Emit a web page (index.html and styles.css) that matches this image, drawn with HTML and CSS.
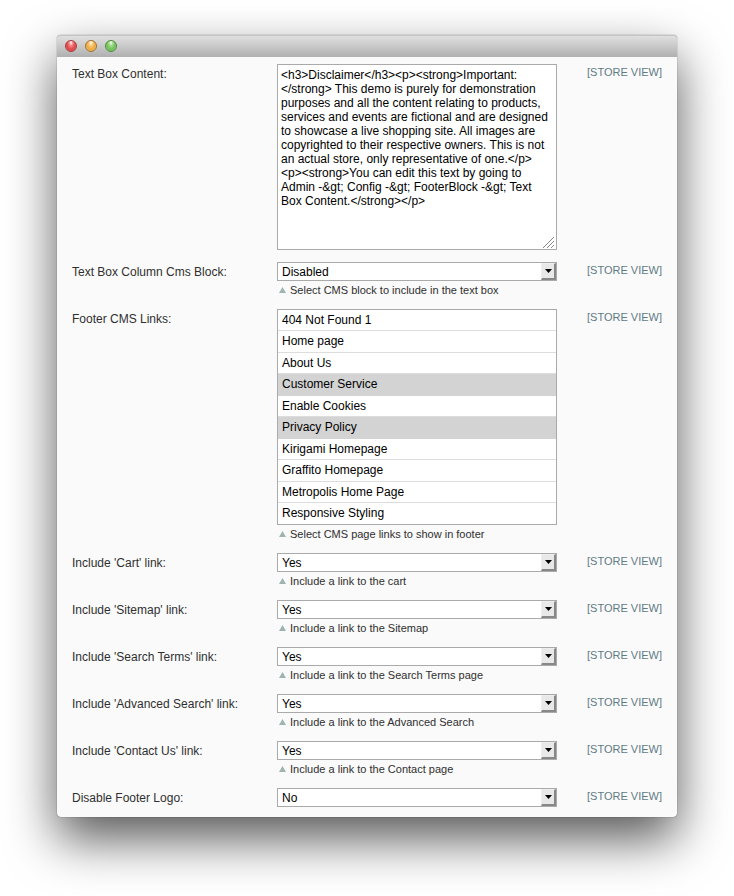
FILE: index.html
```html
<!DOCTYPE html>
<html lang="en">
<head>
<meta charset="utf-8">
<meta name="viewport" content="width=device-width, initial-scale=1">
<title>Footer Block</title>
<link rel="stylesheet" href="styles.css">
</head>
<body>
<main class="window">
  <header class="titlebar">
    <button type="button" class="light light-close" aria-label="Close"></button>
    <button type="button" class="light light-minimize" aria-label="Minimize"></button>
    <button type="button" class="light light-zoom" aria-label="Zoom"></button>
  </header>
  <form class="settings">
    <div class="row">
      <label class="name" for="content">Text Box Content:</label>
      <div class="field">
        <textarea class="control textbox" id="content">&lt;h3&gt;Disclaimer&lt;/h3&gt;&lt;p&gt;&lt;strong&gt;Important:
&lt;/strong&gt; This demo is purely for demonstration purposes and all the content relating to products, services and events are fictional and are designed to showcase a live shopping site. All images are copyrighted to their respective owners. This is not an actual store, only representative of one.&lt;/p&gt;
&lt;p&gt;&lt;strong&gt;You can edit this text by going to Admin -&amp;gt; Config -&amp;gt; FooterBlock -&amp;gt; Text Box Content.&lt;/strong&gt;&lt;/p&gt;</textarea>
        <svg class="grip" viewBox="0 0 14 13" aria-hidden="true"><path d="M1 12 12 1M5 12l7-7M9 12l3-3"/></svg>
      </div>
      <span class="scope">[STORE VIEW]</span>
    </div>
    <div class="row">
      <label class="name" for="block">Text Box Column Cms Block:</label>
      <div class="field">
        <div class="dropdown">
          <select class="control" id="block"><option>Disabled</option></select>
          <span class="arrow"><svg viewBox="0 0 7 4" aria-hidden="true"><path d="M0 0h7L3.500 4z"/></svg></span>
        </div>
        <p class="note">Select CMS block to include in the text box</p>
      </div>
      <span class="scope">[STORE VIEW]</span>
    </div>
    <div class="row">
      <label class="name" for="links">Footer CMS Links:</label>
      <div class="field">
        <select class="control listbox" id="links" multiple size="10">
          <option>404 Not Found 1</option>
          <option>Home page</option>
          <option>About Us</option>
          <option selected>Customer Service</option>
          <option>Enable Cookies</option>
          <option selected>Privacy Policy</option>
          <option>Kirigami Homepage</option>
          <option>Graffito Homepage</option>
          <option>Metropolis Home Page</option>
          <option>Responsive Styling</option>
        </select>
        <p class="note">Select CMS page links to show in footer</p>
      </div>
      <span class="scope">[STORE VIEW]</span>
    </div>
    <div class="row">
      <label class="name" for="cart">Include 'Cart' link:</label>
      <div class="field">
        <div class="dropdown">
          <select class="control" id="cart"><option>Yes</option><option>No</option></select>
          <span class="arrow"><svg viewBox="0 0 7 4" aria-hidden="true"><path d="M0 0h7L3.500 4z"/></svg></span>
        </div>
        <p class="note">Include a link to the cart</p>
      </div>
      <span class="scope">[STORE VIEW]</span>
    </div>
    <div class="row">
      <label class="name" for="sitemap">Include 'Sitemap' link:</label>
      <div class="field">
        <div class="dropdown">
          <select class="control" id="sitemap"><option>Yes</option><option>No</option></select>
          <span class="arrow"><svg viewBox="0 0 7 4" aria-hidden="true"><path d="M0 0h7L3.500 4z"/></svg></span>
        </div>
        <p class="note">Include a link to the Sitemap</p>
      </div>
      <span class="scope">[STORE VIEW]</span>
    </div>
    <div class="row">
      <label class="name" for="terms">Include 'Search Terms' link:</label>
      <div class="field">
        <div class="dropdown">
          <select class="control" id="terms"><option>Yes</option><option>No</option></select>
          <span class="arrow"><svg viewBox="0 0 7 4" aria-hidden="true"><path d="M0 0h7L3.500 4z"/></svg></span>
        </div>
        <p class="note">Include a link to the Search Terms page</p>
      </div>
      <span class="scope">[STORE VIEW]</span>
    </div>
    <div class="row">
      <label class="name" for="advanced">Include 'Advanced Search' link:</label>
      <div class="field">
        <div class="dropdown">
          <select class="control" id="advanced"><option>Yes</option><option>No</option></select>
          <span class="arrow"><svg viewBox="0 0 7 4" aria-hidden="true"><path d="M0 0h7L3.500 4z"/></svg></span>
        </div>
        <p class="note">Include a link to the Advanced Search</p>
      </div>
      <span class="scope">[STORE VIEW]</span>
    </div>
    <div class="row">
      <label class="name" for="contact">Include 'Contact Us' link:</label>
      <div class="field">
        <div class="dropdown">
          <select class="control" id="contact"><option>Yes</option><option>No</option></select>
          <span class="arrow"><svg viewBox="0 0 7 4" aria-hidden="true"><path d="M0 0h7L3.500 4z"/></svg></span>
        </div>
        <p class="note">Include a link to the Contact page</p>
      </div>
      <span class="scope">[STORE VIEW]</span>
    </div>
    <div class="row">
      <label class="name" for="logo">Disable Footer Logo:</label>
      <div class="field">
        <div class="dropdown">
          <select class="control" id="logo"><option>No</option><option>Yes</option></select>
          <span class="arrow"><svg viewBox="0 0 7 4" aria-hidden="true"><path d="M0 0h7L3.500 4z"/></svg></span>
        </div>
      </div>
      <span class="scope">[STORE VIEW]</span>
    </div>
  </form>
</main>
</body>
</html>
```
FILE: styles.css
```css
* { box-sizing: border-box; }

body {
  margin: 0;
  padding: 35px 57px 78px;
  background: #fff;
  color: #2f2f2f;
  font: 12px/14px "Liberation Sans", Arial, sans-serif;
}

.window {
  border-radius: 4px;
  background: #fafafa;
  box-shadow: 0 0 1px rgba(0, 0, 0, .8), 0 22px 50px rgba(0, 0, 0, .66);
}

.titlebar {
  display: flex;
  align-items: center;
  gap: 8px;
  height: 22px;
  padding: 0 8px;
  border-radius: 4px 4px 0 0;
  background: linear-gradient(#e2e2e2, #b0b0b0);
  box-shadow: inset 0 1px #c4c4c4;
}

.light {
  width: 12px;
  height: 12px;
  padding: 0;
  border: 1px solid;
  border-radius: 50%;
}

.light-close {
  border-color: #a13c3c;
  background: radial-gradient(ellipse at 50% 15%, #fff 0, #f58a8a 25%, #e0444a 60%, #f58080 100%);
}

.light-minimize {
  border-color: #a1702e;
  background: radial-gradient(ellipse at 50% 15%, #fff 0, #f9cf80 25%, #eba843 60%, #fce08c 100%);
}

.light-zoom {
  border-color: #4d8a3c;
  background: radial-gradient(ellipse at 50% 15%, #fff 0, #a8dc92 25%, #6fbf58 60%, #b4e89a 100%);
}

.settings { padding: 7px 15px 10px; }

.row {
  display: grid;
  grid-template-columns: 205px minmax(0, 1fr) 75px;
  margin-bottom: 12px;
}

.row:last-child { margin-bottom: 0; }

.name { padding-top: 3px; }

.field {
  position: relative;
  margin-right: 30px;
}

.control {
  display: block;
  width: 100%;
  margin: 0;
  border: 1px solid #aaa;
  border-radius: 0;
  background: #fff;
  color: #000;
  font: inherit;
}

.textbox {
  height: 186px;
  padding: 3px;
  resize: none;
}

.grip {
  position: absolute;
  right: 1px;
  bottom: 1px;
  width: 14px;
  height: 13px;
  fill: none;
  stroke: #888;
}

.dropdown { position: relative; }

.dropdown .control {
  height: 19px;
  padding: 0 20px 0 4px;
  appearance: none;
}

.arrow {
  position: absolute;
  top: 1px;
  right: 1px;
  display: grid;
  place-items: center;
  width: 15px;
  height: 17px;
  border: solid;
  border-width: 1px 2px 2px 1px;
  border-color: #eee #888 #888 #eee;
  background: #e8e8e8;
  pointer-events: none;
}

.arrow svg {
  width: 7px;
  height: 4px;
}

.listbox {
  height: 216px;
  padding: 0;
  overflow: hidden;
}

.listbox option {
  height: 21px;
  min-height: 21px;
  padding: 3px 4px 0;
  border-bottom: 1px solid #ddd;
  color: #000;
}

.listbox option:nth-child(even) { height: 22px; }

.listbox option:checked {
  border-color: #d3d3d3;
  background: #d3d3d3 linear-gradient(#d3d3d3, #d3d3d3);
}

.note {
  display: flex;
  align-items: center;
  gap: 4px;
  margin: 2px 0 0;
  padding-left: 2px;
  font-size: 11px;
  line-height: 14px;
}

.note::before {
  width: 7px;
  height: 6px;
  background: #9fb3b1;
  clip-path: polygon(50% 0, 100% 100%, 0 100%);
  content: "";
}

.scope {
  padding-top: 1px;
  color: #5f7b85;
  font-size: 11px;
}
```
